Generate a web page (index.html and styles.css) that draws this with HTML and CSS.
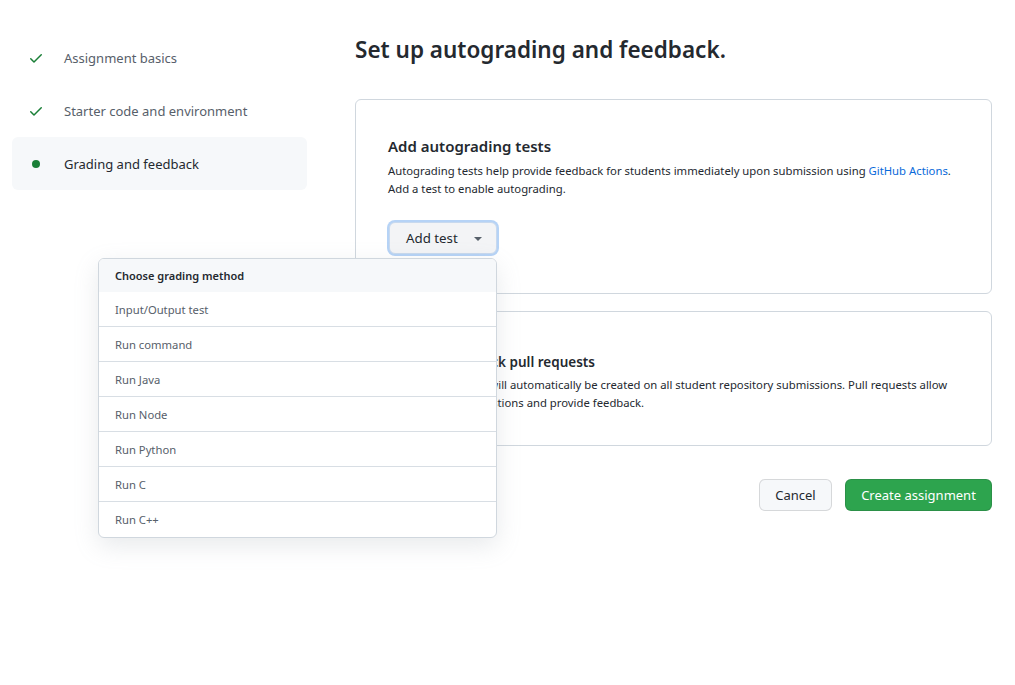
FILE: index.html
```html
<!DOCTYPE html>
<html lang="en">
<head>
<meta charset="utf-8">
<title>Set up autograding and feedback</title>
<link rel="stylesheet" href="styles.css">
</head>
<body>
<div class="page">
  <nav class="steps">
    <div class="step done">
      <svg class="step-icon" viewBox="0 0 16 16" width="16" height="16"><path fill="#1a7f37" d="M13.78 4.22a.75.75 0 0 1 0 1.06l-7.25 7.25a.75.75 0 0 1-1.06 0L2.22 9.28a.75.75 0 0 1 1.06-1.06L6 10.94l6.72-6.72a.75.75 0 0 1 1.06 0Z"/></svg>
      <span>Assignment basics</span>
    </div>
    <div class="step done">
      <svg class="step-icon" viewBox="0 0 16 16" width="16" height="16"><path fill="#1a7f37" d="M13.78 4.22a.75.75 0 0 1 0 1.06l-7.25 7.25a.75.75 0 0 1-1.06 0L2.22 9.28a.75.75 0 0 1 1.06-1.06L6 10.94l6.72-6.72a.75.75 0 0 1 1.06 0Z"/></svg>
      <span>Starter code and environment</span>
    </div>
    <div class="step current">
      <span class="step-icon dot-wrap"><span class="dot"></span></span>
      <span>Grading and feedback</span>
    </div>
  </nav>

  <main class="content">
    <h1 class="title">Set up autograding and feedback.</h1>

    <section class="card card-tests">
      <h2 class="card-title">Add autograding tests</h2>
      <p class="card-text"><span class="nowrap">Autograding tests help provide feedback for students immediately upon submission using <a href="#">GitHub Actions</a>.</span><br>Add a test to enable autograding.</p>
      <div class="menu-anchor">
        <button class="btn btn-add" type="button">Add test <span class="caret"></span></button>
        <div class="menu">
          <div class="menu-header">Choose grading method</div>
          <div class="menu-item">Input/Output test</div>
          <div class="menu-item">Run command</div>
          <div class="menu-item">Run Java</div>
          <div class="menu-item">Run Node</div>
          <div class="menu-item">Run Python</div>
          <div class="menu-item">Run C</div>
          <div class="menu-item">Run C++</div>
        </div>
      </div>
    </section>

    <section class="card card-pr">
      <h2 class="card-title card-title-sm">Enable feedback pull requests</h2>
      <p class="card-text">A new pull request will automatically be created on all student repository submissions. Pull requests allow<br>students to ask questions and provide feedback.</p>
    </section>

    <div class="actions">
      <button class="btn btn-cancel" type="button">Cancel</button>
      <button class="btn btn-primary" type="button">Create assignment</button>
    </div>
  </main>
</div>
</body>
</html>
```

FILE: styles.css
```css
* { box-sizing: border-box; }
html, body { margin: 0; padding: 0; background: #ffffff; }
body {
  font-family: "Noto Sans", "Open Sans", sans-serif;
  color: #24292f;
  -webkit-font-smoothing: antialiased;
}
.page {
  display: flex;
  align-items: flex-start;
  min-height: 685px;
  padding: 31px 23px 0 12px;
}
.steps {
  width: 295px;
  flex: none;
  display: flex;
  flex-direction: column;
}
.step {
  height: 53px;
  display: flex;
  align-items: center;
  padding-left: 16px;
  gap: 20px;
  font-size: 13px;
  color: #57606a;
  border-radius: 6px;
}
.step.current {
  background: #f6f8fa;
  color: #24292f;
}
.step-icon { width: 16px; height: 16px; flex: none; }
.dot-wrap { display: flex; align-items: center; justify-content: center; }
.dot { width: 8px; height: 8px; border-radius: 50%; background: #1a7f37; }

.content {
  margin-left: 48px;
  flex: 1;
  display: flex;
  flex-direction: column;
}
.title {
  margin: 1px 0 0;
  font-size: 22.5px;
  font-weight: 600;
  line-height: 36px;
  height: 36px;
  color: #24292f;
}
.card {
  border: 1px solid #d0d7de;
  border-radius: 6px;
  padding: 0 32px;
}
.card-tests {
  margin-top: 31px;
  height: 195px;
  padding-top: 35px;
  display: flex;
  flex-direction: column;
}
.card-pr {
  margin-top: 17px;
  height: 135px;
  padding-top: 39px;
}
.card-title {
  margin: 0;
  font-size: 15px;
  font-weight: 600;
  line-height: 22px;
  color: #24292f;
}
.card-title-sm {
  font-size: 13.5px;
  padding-left: 10px;
}
.card-text {
  margin: 5px 0 0;
  font-size: 11.3px;
  line-height: 18px;
  color: #24292f;
}
.nowrap { white-space: nowrap; }
.card-pr .card-text { margin-top: 3px; }
.card-text a { color: #0969da; text-decoration: none; }

.menu-anchor {
  position: relative;
  display: inline-block;
  align-self: flex-start;
  margin-top: 24px;
}
.btn {
  font-family: inherit;
  border-radius: 6px;
  height: 32px;
  cursor: pointer;
}
.btn-add {
  margin-left: 1px;
  width: 108px;
  background: #f3f4f6;
  border: 1px solid #c8d9ee;
  box-shadow: 0 0 0 2px #b6d3f6;
  font-size: 13.3px;
  color: #24292f;
  display: flex;
  align-items: center;
  padding: 0 0 0 16px;
  gap: 16px;
}
.caret {
  width: 0; height: 0;
  border-left: 4px solid transparent;
  border-right: 4px solid transparent;
  border-top: 4px solid #57606a;
  margin-top: 1px;
}
.menu {
  position: absolute;
  right: 0;
  top: 36px;
  width: 399px;
  background: #fff;
  border: 1px solid #d0d7de;
  border-radius: 6px;
  box-shadow: 0 8px 24px rgba(140, 149, 159, 0.2);
  overflow: hidden;
  z-index: 10;
}
.menu-header {
  height: 33px;
  display: flex;
  align-items: center;
  padding-left: 16px;
  background: #f6f8fa;
  font-size: 11px;
  font-weight: 600;
  color: #24292f;
}
.menu-item {
  height: 35px;
  display: flex;
  align-items: center;
  padding-left: 16px;
  font-size: 11.25px;
  color: #57606a;
  border-top: 1px solid #d8dee4;
}
.menu-header + .menu-item {
  border-top: none;
  height: 34px;
}
.menu-item:last-child { height: 36px; padding-bottom: 1px; }
.actions {
  display: flex;
  justify-content: flex-end;
  gap: 13px;
  margin-top: 33px;
}
.btn-cancel {
  width: 73px;
  background: #f6f8fa;
  border: 1px solid rgba(31, 35, 40, 0.15);
  font-size: 13px;
  color: #24292f;
}
.btn-primary {
  width: 147px;
  background: #2da44e;
  border: 1px solid rgba(31, 35, 40, 0.15);
  font-size: 13px;
  color: #ffffff;
}
```
